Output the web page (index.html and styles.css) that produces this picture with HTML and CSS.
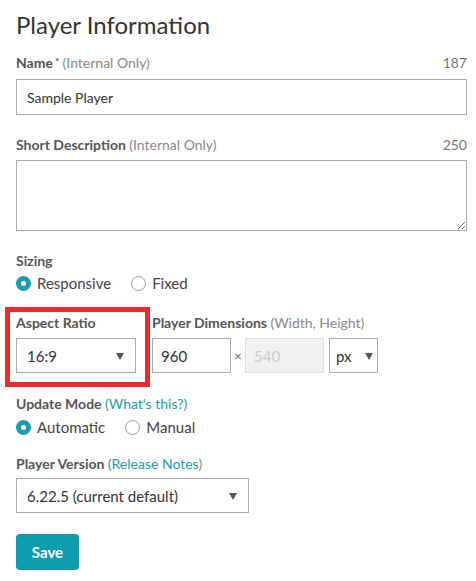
FILE: index.html
```html
<!DOCTYPE html>
<html>
<head>
<meta charset="utf-8">
<link rel="stylesheet" href="styles.css">
</head>
<body>
<div class="page">
  <h1 class="title">Player Information</h1>

  <div class="label-row first">
    <span class="label">Name<sup class="req">*</sup> <span class="hint">(Internal Only)</span></span>
    <span class="count">187</span>
  </div>
  <input class="text-input" type="text" value="Sample Player">

  <div class="label-row spaced">
    <span class="label">Short Description <span class="hint">(Internal Only)</span></span>
    <span class="count">250</span>
  </div>
  <textarea class="text-area"></textarea>

  <div class="label-row spaced sizing-label">
    <span class="label">Sizing</span>
  </div>
  <div class="radio-row">
    <span class="radio"><span class="dot on"></span>Responsive</span>
    <span class="radio"><span class="dot"></span>Fixed</span>
  </div>

  <div class="dims-row">
    <div class="group aspect">
      <div class="label-row"><span class="label">Aspect Ratio</span></div>
      <div class="select w-aspect"><span>16:9</span><svg class="caret" width="8" height="8" viewBox="0 0 8 8"><path d="M0 1h8L4 8z" fill="#555"/></svg></div>
    </div>
    <div class="group">
      <div class="label-row"><span class="label">Player Dimensions <span class="hint">(Width, Height)</span></span></div>
      <div class="dims">
        <div class="box w-dim">960</div>
        <span class="times">×</span>
        <div class="box w-dim disabled">540</div>
        <div class="select w-unit"><span>px</span><svg class="caret" width="8" height="8" viewBox="0 0 8 8"><path d="M0 1h8L4 8z" fill="#555"/></svg></div>
      </div>
    </div>
  </div>

  <div class="label-row update">
    <span class="label">Update Mode <a class="link">(What's this?)</a></span>
  </div>
  <div class="radio-row">
    <span class="radio"><span class="dot on"></span>Automatic</span>
    <span class="radio"><span class="dot"></span>Manual</span>
  </div>

  <div class="label-row version">
    <span class="label">Player Version <a class="link">(Release Notes</a><span class="hint">)</span></span>
  </div>
  <div class="select w-version"><span>6.22.5 (current default)</span><svg class="caret" width="8" height="8" viewBox="0 0 8 8"><path d="M0 1h8L4 8z" fill="#555"/></svg></div>

  <button class="save">Save</button>
</div>
</body>
</html>
```

FILE: styles.css
```css
* { box-sizing: border-box; }
html, body { margin: 0; padding: 0; background: #fff; }
body {
  font-family: Lato, "Open Sans", "Liberation Sans", sans-serif;
  color: #333;
}
.page {
  width: 476px;
  padding: 0 9px 0 16px;
}
.title {
  margin: 10px 0 0;
  font-size: 24px;
  line-height: 30px;
  font-weight: 400;
  color: #333;
}
.label-row {
  display: flex;
  justify-content: space-between;
  align-items: center;
  height: 18px;
  font-size: 14px;
  line-height: 18px;
  margin-bottom: 6px;
}
.label-row.first { margin-top: 14px; margin-bottom: 7px; }
.label-row.spaced { margin-top: 21px; }
.label-row.sizing-label { margin-bottom: 2px; }
.label-row.update { margin-top: 22px; margin-bottom: 3px; }
.label-row.version { margin-top: 17px; margin-bottom: 5px; }
.label { font-weight: 700; color: #555; }
.req { font-size: 10px; vertical-align: top; position: relative; top: -2px; margin-left: 2px; }
.hint { font-weight: 400; color: #888; }
.link { font-weight: 400; color: #1a9cb0; text-decoration: none; }
.count { color: #777; font-size: 14px; }

.text-input, .text-area {
  display: block;
  width: 100%;
  border: 1px solid #aaa;
  border-radius: 0;
  font-family: inherit;
  color: #333;
  font-size: 14px;
  margin: 0;
}
.text-input { height: 36px; padding: 0 10px; }
.text-area { height: 71px; resize: vertical; padding: 8px 10px; }

.radio-row {
  display: flex;
  align-items: center;
  height: 22px;
  gap: 20px;
  font-size: 15px;
  color: #444;
}
.radio { display: flex; align-items: center; gap: 6px; }
.dot {
  width: 15px;
  height: 15px;
  border-radius: 50%;
  border: 1px solid #999;
  background: #fff;
  display: inline-block;
}
.dot.on {
  border: 5px solid #1a9cb0;
  background: #fff;
}

.dims-row {
  display: flex;
  gap: 16px;
  margin-top: 20px;
}
.group.aspect { position: relative; }
.group.aspect::after {
  content: "";
  position: absolute;
  top: -7px;
  left: -11px;
  right: -14px;
  bottom: -14px;
  border: 5px solid #ee2a2f;
  pointer-events: none;
}
.select, .box {
  height: 35px;
  border: 1px solid #aaa;
  font-size: 15px;
  color: #333;
  display: flex;
  align-items: center;
  padding: 0 10px;
  background: #fff;
}
.select { justify-content: space-between; }
.caret { flex: none; }
.w-aspect { width: 120px; padding-right: 11px; }
.w-version { width: 233px; padding-right: 11px; }
.w-unit { width: 49px; padding: 0 4px 0 6px; }
.w-dim { width: 79px; padding: 0 8px; }
.box.disabled { background: #f1f1f1; border-color: #ddd; color: #ccc; }
.dims { display: flex; align-items: center; }
.times { width: 14px; text-align: center; font-size: 13px; color: #666; }
.dims .disabled { margin-right: 5px; }

.save {
  display: block;
  margin-top: 21px;
  width: 63px;
  height: 36px;
  border: none;
  border-radius: 4px;
  background: #0e9cb2;
  color: #fff;
  font-family: inherit;
  font-weight: 700;
  font-size: 15px;
  padding: 0;
}
```
